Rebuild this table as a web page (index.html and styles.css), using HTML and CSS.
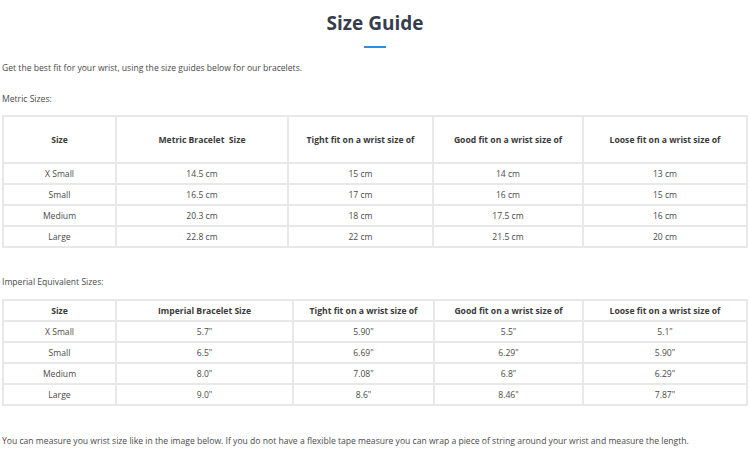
FILE: index.html
```html
<!DOCTYPE html>
<html lang="en">
<head>
<meta charset="utf-8">
<title>Size Guide</title>
<link rel="stylesheet" href="styles.css">
</head>
<body>
<main class="page">
  <header class="head">
    <h1 class="title">Size Guide</h1>
    <span class="rule"></span>
  </header>
  <p class="intro">Get the best fit for your wrist, using the size guides below for our bracelets.</p>
  <p class="label label-metric">Metric Sizes:</p>
  <table class="guide guide-metric">
    <colgroup>
      <col class="c1"><col class="c2"><col class="c3"><col class="c4"><col class="c5">
    </colgroup>
    <thead>
      <tr class="hrow tall"><th>Size</th><th>Metric Bracelet&nbsp; Size</th><th>Tight fit on a wrist size of</th><th>Good fit on a wrist size of</th><th>Loose fit on a wrist size of</th></tr>
    </thead>
    <tbody>
      <tr><td>X Small</td><td>14.5 cm</td><td>15 cm</td><td>14 cm</td><td>13 cm</td></tr>
      <tr><td>Small</td><td>16.5 cm</td><td>17 cm</td><td>16 cm</td><td>15 cm</td></tr>
      <tr><td>Medium</td><td>20.3 cm</td><td>18 cm</td><td>17.5 cm</td><td>16 cm</td></tr>
      <tr><td>Large</td><td>22.8 cm</td><td>22 cm</td><td>21.5 cm</td><td>20 cm</td></tr>
    </tbody>
  </table>
  <p class="label label-imperial">Imperial Equivalent Sizes:</p>
  <table class="guide guide-imperial">
    <colgroup>
      <col class="d1"><col class="d2"><col class="d3"><col class="d4"><col class="d5">
    </colgroup>
    <thead>
      <tr class="hrow"><th>Size</th><th>Imperial Bracelet Size</th><th>Tight fit on a wrist size of</th><th>Good fit on a wrist size of</th><th>Loose fit on a wrist size of</th></tr>
    </thead>
    <tbody>
      <tr><td>X Small</td><td>5.7"</td><td>5.90"</td><td>5.5"</td><td>5.1"</td></tr>
      <tr><td>Small</td><td>6.5"</td><td>6.69"</td><td>6.29"</td><td>5.90"</td></tr>
      <tr><td>Medium</td><td>8.0"</td><td>7.08"</td><td>6.8"</td><td>6.29"</td></tr>
      <tr><td>Large</td><td>9.0"</td><td>8.6"</td><td>8.46"</td><td>7.87"</td></tr>
    </tbody>
  </table>
  <p class="outro">You can measure you wrist size like in the image below. If you do not have a flexible tape measure you can wrap a piece of string around your wrist and measure the length.</p>
</main>
</body>
</html>
```

FILE: styles.css
```css
html, body {
  margin: 0;
  padding: 0;
  background: #ffffff;
}
body {
  font-family: "Open Sans", "Liberation Sans", sans-serif;
  color: #444444;
  font-size: 8.6px;
}
.page {
  width: 746px;
  padding: 0 0 0 2px;
}
.head {
  display: flex;
  flex-direction: column;
  align-items: center;
  padding-top: 9px;
}
.title {
  margin: 0;
  font-size: 19px;
  line-height: 28px;
  font-weight: 700;
  color: #363d4c;
}
.rule {
  display: block;
  width: 22px;
  height: 2px;
  margin-top: 9px;
  background: #2b8fe3;
}
.intro {
  margin: 14px 0 0;
  line-height: 12px;
  color: #4a4a4a;
}
.label {
  margin: 0;
  line-height: 12px;
  color: #4a4a4a;
}
.label-metric {
  margin-top: 19px;
}
.label-imperial {
  margin-top: 28px;
}
.outro {
  margin: 29px 0 0;
  line-height: 12px;
  color: #4a4a4a;
}
.guide {
  border-collapse: collapse;
  table-layout: fixed;
  width: 744px;
  color: #4a4a4a;
}
.guide-metric {
  margin-top: 10px;
}
.guide-imperial {
  margin-top: 11px;
}
.guide th, .guide td {
  border: 2px solid #e8e8e8;
  text-align: center;
  padding: 0;
  line-height: 12px;
  white-space: nowrap;
  box-sizing: border-box;
}
.guide td, .guide .hrow th {
  height: 21px;
}
.guide th {
  font-weight: 700;
  color: #3a3a3a;
}
.guide .hrow.tall th {
  height: 47px;
}
.c1 { width: 113px; }
.c2 { width: 172px; }
.c3 { width: 145px; }
.c4 { width: 150px; }
.c5 { width: 164px; }
.d1 { width: 113px; }
.d2 { width: 177px; }
.d3 { width: 141px; }
.d4 { width: 149px; }
.d5 { width: 164px; }
```
